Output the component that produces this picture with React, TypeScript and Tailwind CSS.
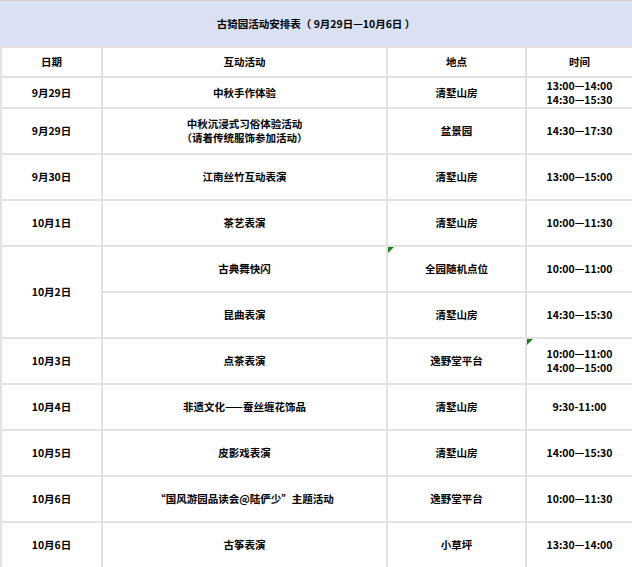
import React from 'react';

type Row = {
  date?: string;
  span?: number;
  activity: string[];
  place: string;
  time: string[];
  h: number;
  markPlace?: boolean;
  markTime?: boolean;
};

const rows: Row[] = [
  { date: '9月29日', activity: ['中秋手作体验'], place: '清墅山房', time: ['13:00—14:00', '14:30—15:30'], h: 31 },
  { date: '9月29日', activity: ['中秋沉浸式习俗体验活动', '（请着传统服饰参加活动）'], place: '盆景园', time: ['14:30—17:30'], h: 46 },
  { date: '9月30日', activity: ['江南丝竹互动表演'], place: '清墅山房', time: ['13:00—15:00'], h: 46 },
  { date: '10月1日', activity: ['茶艺表演'], place: '清墅山房', time: ['10:00—11:30'], h: 46 },
  { date: '10月2日', span: 2, activity: ['古典舞快闪'], place: '全园随机点位', time: ['10:00—11:00'], h: 46, markPlace: true },
  { activity: ['昆曲表演'], place: '清墅山房', time: ['14:30—15:30'], h: 46 },
  { date: '10月3日', activity: ['点茶表演'], place: '逸野堂平台', time: ['10:00—11:00', '14:00—15:00'], h: 46, markTime: true },
  { date: '10月4日', activity: ['非遗文化——蚕丝缠花饰品'], place: '清墅山房', time: ['9:30-11:00'], h: 46 },
  { date: '10月5日', activity: ['皮影戏表演'], place: '清墅山房', time: ['14:00—15:30'], h: 46 },
  { date: '10月6日', activity: ['“国风游园品读会@陆俨少”主题活动'], place: '逸野堂平台', time: ['10:00—11:30'], h: 46 },
  { date: '10月6日', activity: ['古筝表演'], place: '小草坪', time: ['13:30—14:00'], h: 46 },
];

const cell = 'border-2 border-[#e2e2e2] text-center align-middle p-0 leading-[14px]';

function Mark() {
  return (
    <span className="absolute left-0 top-0 w-0 h-0 border-t-[6px] border-r-[6px] border-t-[#1a7f1a] border-r-transparent" />
  );
}

export default function App() {
  return (
    <div
      className="w-[632px] h-[567px] overflow-hidden bg-white text-black font-bold text-[10.5px]"
      style={{ fontFamily: '"Noto Sans CJK SC", "Noto Sans", sans-serif' }}
    >
      <div className="h-[47px] bg-[#d9e1f2] border-t border-[#d0d0d0] flex items-center justify-center">
        古猗园活动安排表（ 9月29日—10月6日 ）
      </div>
      <table className="w-[632px] table-fixed border-collapse -mt-px">
        <colgroup>
          <col className="w-[101px]" />
          <col className="w-[285px]" />
          <col className="w-[139px]" />
          <col className="w-[107px]" />
        </colgroup>
        <tbody>
          <tr className="h-[30px]">
            <td className={cell}>日期</td>
            <td className={cell}>互动活动</td>
            <td className={cell}>地点</td>
            <td className={cell}>时间</td>
          </tr>
          {rows.map((r, i) => (
            <tr key={i} style={{ height: r.h }}>
              {r.date && (
                <td className={cell} rowSpan={r.span ?? 1}>
                  {r.date}
                </td>
              )}
              <td className={cell}>
                {r.activity.map((a, j) => (
                  <div key={j}>{a}</div>
                ))}
              </td>
              <td className={`${cell} relative`}>
                {r.markPlace && <Mark />}
                {r.place}
              </td>
              <td className={`${cell} relative`}>
                {r.markTime && <Mark />}
                {r.time.map((t, j) => (
                  <div key={j} className="leading-[14px]">
                    {t}
                  </div>
                ))}
              </td>
            </tr>
          ))}
        </tbody>
      </table>
    </div>
  );
}
